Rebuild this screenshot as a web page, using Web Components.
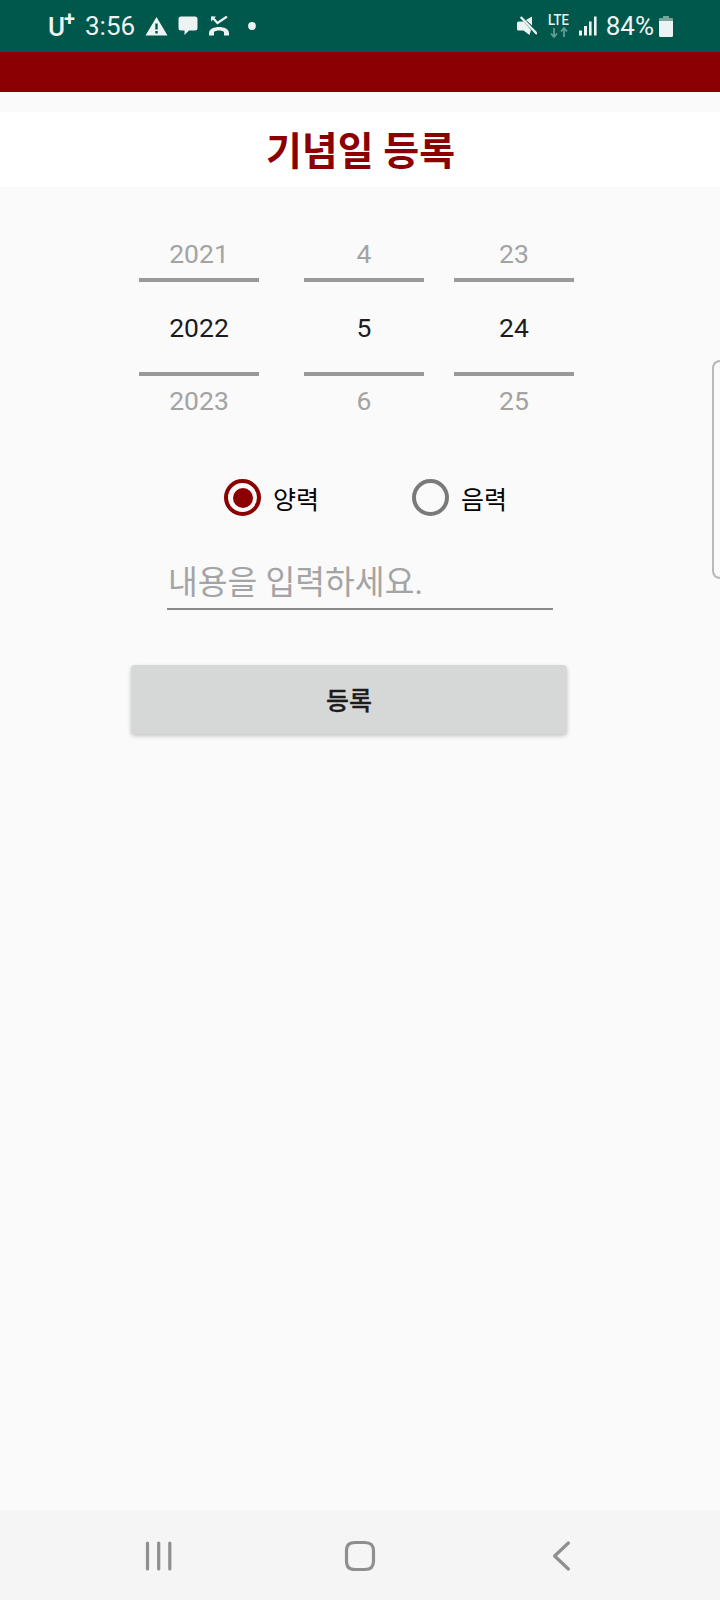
<!DOCTYPE html>
<html lang="ko">
<head>
<meta charset="utf-8">
<title>기념일 등록</title>
<style>
  html, body { margin: 0; padding: 0; }
  body {
    width: 720px;
    height: 1600px;
    background: #fafafa;
    font-family: Roboto, "Noto Sans CJK KR", sans-serif;
    display: flex;
    flex-direction: column;
    position: relative;
    overflow: hidden;
  }
  main { flex: 1; display: block; padding-top: 43px; }
</style>
</head>
<body>
<status-bar></status-bar>
<app-bar></app-bar>
<title-bar>기념일 등록</title-bar>
<main>
  <date-picker>
    <date-wheel prev="2021" cur="2022" next="2023"></date-wheel>
    <date-wheel prev="4" cur="5" next="6"></date-wheel>
    <date-wheel prev="23" cur="24" next="25"></date-wheel>
  </date-picker>
  <radio-group>
    <radio-choice checked>양력</radio-choice>
    <radio-choice>음력</radio-choice>
  </radio-group>
  <text-field>내용을 입력하세요.</text-field>
  <flat-button>등록</flat-button>
</main>
<nav-bar></nav-bar>
<edge-handle></edge-handle>

<script>
class StatusBar extends HTMLElement {
  connectedCallback() {
    this.attachShadow({ mode: 'open' });
    this.shadowRoot.innerHTML = `
      <style>
        :host {
          display: flex;
          align-items: center;
          height: 52px;
          flex: none;
          background: #00574b;
          color: #edf3f2;
          padding: 0 47px 0 48px;
          box-sizing: border-box;
          font-size: 26px;
        }
        .row { display: flex; align-items: center; }
        .carrier { position: relative; font-weight: 500; font-size: 26px; width: 37px; margin-top: 2px; }
        .carrier sup { position: absolute; left: 16px; top: -3px; font-size: 20px; line-height: 20px; font-weight: 700; }
        .spacer { flex: 1; }
        svg { display: block; fill: currentColor; flex: none; }
        .net { display: flex; flex-direction: column; width: 23px; margin-left: 11px; }
        .net span {
          display: block;
          width: 26px;
          height: 13px;
          line-height: 13px;
          font-size: 15px;
          font-weight: 500;
          transform: scaleX(.87);
          transform-origin: left center;
          margin-right: -3px;
        }
      </style>
      <div class="row">
        <span class="carrier">U<sup>+</sup></span>
        <span>3:56</span>
        <svg style="margin-left:10px" width="23" height="20" viewBox="0 0 23 20"><path fill-rule="evenodd" d="M11.5 1 L22.5 19.5 H0.5 Z M10.3 7.5 V13.5 H12.7 V7.5 Z M10.3 15 V17.4 H12.7 V15 Z"/></svg>
        <svg style="margin-left:10px" width="20" height="20" viewBox="0 0 20 20"><path d="M3 0.5 H17 A2.5 2.5 0 0 1 19.5 3 V12 A2.5 2.5 0 0 1 17 14.5 H11 L6.5 19 V14.5 H3 A2.5 2.5 0 0 1 0.5 12 V3 A2.5 2.5 0 0 1 3 0.5 Z"/></svg>
        <svg style="margin-left:11px" width="20" height="20" viewBox="0 0 20 20"><path d="M3 1 L8.5 7 L18 0.5" fill="none" stroke="currentColor" stroke-width="2.2"/><path d="M2 0.5 H7 L2 5.5 Z"/><path d="M0 17 C0 9 20 9 20 17 V19.5 H15 V16 C13 14 7 14 5 16 V19.5 H0 Z"/></svg>
        <svg style="margin-left:19px" width="8" height="8" viewBox="0 0 8 8"><circle cx="4" cy="4" r="3.9"/></svg>
      </div>
      <div class="spacer"></div>
      <div class="row">
        <svg width="20" height="20" viewBox="0 0 20 20">
          <path d="M1.5 5.5 H6.5 L14 14 L12.5 19 L6.5 14.5 H1.5 A1.5 1.5 0 0 1 0 13 V7 A1.5 1.5 0 0 1 1.5 5.5 Z"/>
          <path d="M9 4 L15 0.5 V9.5 Z"/>
          <path d="M3.7 1 L20 18" fill="none" stroke="currentColor" stroke-width="2.4"/>
        </svg>
        <div class="net">
          <span>LTE</span>
          <svg width="23" height="11" viewBox="0 0 23 11">
            <path d="M6 1 V9.5 M3 6.5 L6 10 L9 6.5" fill="none" stroke="currentColor" stroke-opacity=".45" stroke-width="1.7"/>
            <path d="M16 10 V1.5 M13 4.5 L16 1 L19 4.5" fill="none" stroke="currentColor" stroke-opacity=".45" stroke-width="1.7"/>
          </svg>
        </div>
        <svg style="margin-left:8px" width="18" height="20" viewBox="0 0 18 20"><path d="M0 14.5 H3 V19.5 H0 Z M5 10 H8 V19.5 H5 Z M10 5.5 H12.6 V19.5 H10 Z M15 0.5 H17.6 V19.5 H15 Z"/></svg>
        <span style="margin-left:9px">84%</span>
        <svg style="margin-left:5px" width="14" height="21" viewBox="0 0 14 21"><path d="M4 0 H10 V2 H4 Z M1 2 H13 A1 1 0 0 1 14 3 V5 H0 V3 A1 1 0 0 1 1 2 Z" opacity=".5"/><path d="M0 5 H14 V19.5 A1.5 1.5 0 0 1 12.5 21 H1.5 A1.5 1.5 0 0 1 0 19.5 Z"/></svg>
      </div>
    `;
  }
}

class AppBar extends HTMLElement {
  connectedCallback() {
    this.attachShadow({ mode: 'open' });
    this.shadowRoot.innerHTML = `
      <style>
        :host { display: block; height: 40px; flex: none; background: #8b0000; margin-bottom: 20px; }
      </style>
    `;
  }
}

class TitleBar extends HTMLElement {
  connectedCallback() {
    this.attachShadow({ mode: 'open' });
    this.shadowRoot.innerHTML = `
      <style>
        :host {
          display: flex;
          align-items: center;
          justify-content: center;
          flex: none;
          height: 75px;
          background: #fff;
          color: #8b0000;
          font-size: 39px;
          font-weight: 700;
          padding: 0 0 4px 1px;
          box-sizing: border-box;
        }
      </style>
      <slot></slot>
    `;
  }
}

class DatePicker extends HTMLElement {
  connectedCallback() {
    this.attachShadow({ mode: 'open' });
    this.shadowRoot.innerHTML = `
      <style>
        :host { display: flex; padding-left: 139px; }
        ::slotted(date-wheel:nth-child(2)) { margin-left: 45px; }
        ::slotted(date-wheel:nth-child(3)) { margin-left: 30px; }
      </style>
      <slot></slot>
    `;
  }
}

class DateWheel extends HTMLElement {
  connectedCallback() {
    this.attachShadow({ mode: 'open' });
    this.shadowRoot.innerHTML = `
      <style>
        :host { display: flex; flex-direction: column; width: 120px; font-size: 26.5px; text-align: center; }
        div { display: flex; align-items: center; justify-content: center; box-sizing: border-box; }
        .side { color: #a3a3a3; }
        .prev { height: 48px; padding-bottom: 2px; }
        .next { height: 52px; padding-bottom: 3px; }
        .cur {
          height: 98px;
          color: #1c1c1c;
          border-top: 4px solid #999;
          border-bottom: 4px solid #999;
          padding-top: 1px;
        }
      </style>
      <div class="side prev">${this.getAttribute('prev')}</div>
      <div class="cur">${this.getAttribute('cur')}</div>
      <div class="side next">${this.getAttribute('next')}</div>
    `;
  }
}

class RadioGroup extends HTMLElement {
  connectedCallback() {
    this.attachShadow({ mode: 'open' });
    this.shadowRoot.innerHTML = `
      <style>
        :host { display: flex; padding-left: 224px; margin-top: 51px; }
        ::slotted(radio-choice) { width: 188px; }
      </style>
      <slot></slot>
    `;
  }
}

class RadioChoice extends HTMLElement {
  connectedCallback() {
    this.attachShadow({ mode: 'open' });
    this.shadowRoot.innerHTML = `
      <style>
        :host { display: flex; align-items: center; gap: 12px; font-size: 25px; color: #000; height: 37px; }
        .ring {
          width: 37px;
          height: 37px;
          box-sizing: border-box;
          border-radius: 50%;
          border: 4px solid #7a7a7a;
          display: flex;
          align-items: center;
          justify-content: center;
          flex: none;
        }
        :host([checked]) .ring { border-color: #8b0000; }
        :host([checked]) .ring::after {
          content: "";
          width: 20px;
          height: 20px;
          border-radius: 50%;
          background: #8b0000;
        }
      </style>
      <span class="ring"></span>
      <span><slot></slot></span>
    `;
  }
}

class TextField extends HTMLElement {
  connectedCallback() {
    this.attachShadow({ mode: 'open' });
    this.shadowRoot.innerHTML = `
      <style>
        :host {
          display: flex;
          align-items: center;
          width: 386px;
          height: 64px;
          box-sizing: border-box;
          margin: 30px 0 0 167px;
          padding: 5px 0 0 1px;
          border-bottom: 2px solid #8a8a8a;
          color: #a4a4a4;
          font-size: 32.4px;
        }
      </style>
      <slot></slot>
    `;
  }
}

class FlatButton extends HTMLElement {
  connectedCallback() {
    this.attachShadow({ mode: 'open' });
    this.shadowRoot.innerHTML = `
      <style>
        :host {
          display: flex;
          align-items: center;
          justify-content: center;
          width: 436px;
          height: 69px;
          box-sizing: border-box;
          padding-bottom: 2px;
          margin: 55px 0 0 131px;
          background: #d6d7d7;
          border-radius: 4px;
          box-shadow: 0 2px 4px rgba(0,0,0,.22);
          color: #1c1c1c;
          font-size: 25px;
          font-weight: 500;
          -webkit-text-stroke: .3px #1c1c1c;
        }
      </style>
      <slot></slot>
    `;
  }
}

class NavBar extends HTMLElement {
  connectedCallback() {
    this.attachShadow({ mode: 'open' });
    this.shadowRoot.innerHTML = `
      <style>
        :host {
          display: flex;
          align-items: center;
          flex: none;
          height: 90px;
          background: #f5f5f5;
          padding: 2px 0 0 144px;
          box-sizing: border-box;
        }
        svg { display: block; flex: none; fill: none; stroke: #8f8f8f; stroke-linecap: round; stroke-linejoin: round; }
      </style>
      <svg width="30" height="32" viewBox="0 0 30 32" stroke-width="3.2"><path d="M3.5 3 V29 M14.7 3 V29 M25.8 3 V29"/></svg>
      <svg style="margin-left:169px" width="34" height="34" viewBox="0 0 34 34" stroke-width="3.2"><path d="M12 3.5 H22 C28 3.5 30.5 6 30.5 12 V22 C30.5 28 28 30.5 22 30.5 H12 C6 30.5 3.5 28 3.5 22 V12 C3.5 6 6 3.5 12 3.5 Z"/></svg>
      <svg style="margin-left:174px" width="22" height="32" viewBox="0 0 22 32" stroke-width="3.2"><path d="M17.4 3 L3.6 16 L17.4 29"/></svg>
    `;
  }
}

class EdgeHandle extends HTMLElement {
  connectedCallback() {
    this.attachShadow({ mode: 'open' });
    this.shadowRoot.innerHTML = `
      <style>
        :host {
          position: absolute;
          top: 360px;
          right: 0;
          width: 8px;
          height: 219px;
          box-sizing: border-box;
          border: 2px solid #b8b8b8;
          border-right: 0;
          border-radius: 8px 0 0 8px;
        }
      </style>
    `;
  }
}

customElements.define('status-bar', StatusBar);
customElements.define('app-bar', AppBar);
customElements.define('title-bar', TitleBar);
customElements.define('date-picker', DatePicker);
customElements.define('date-wheel', DateWheel);
customElements.define('radio-group', RadioGroup);
customElements.define('radio-choice', RadioChoice);
customElements.define('text-field', TextField);
customElements.define('flat-button', FlatButton);
customElements.define('nav-bar', NavBar);
customElements.define('edge-handle', EdgeHandle);
</script>
</body>
</html>
